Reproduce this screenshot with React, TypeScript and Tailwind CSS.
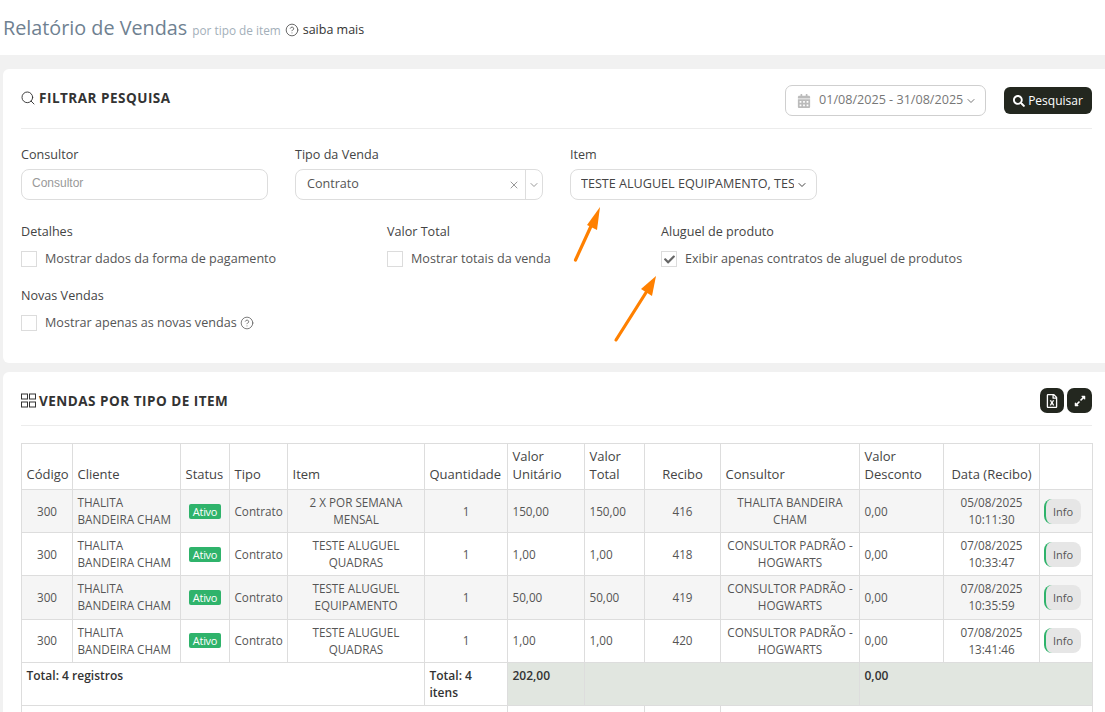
import React from "react";
import { Search, ChevronDown, CircleHelp, X } from "lucide-react";
import { FaCalendarAlt, FaSearch, FaCheck, FaRegFileExcel, FaExpandAlt } from "react-icons/fa";

const GridIcon = () => (
  <svg width="15" height="15" viewBox="0 0 15 15" fill="none" stroke="#333" strokeWidth="1" className="shrink-0">
    <rect x="0.5" y="1" width="6" height="5" />
    <rect x="8.5" y="1" width="6" height="5" />
    <rect x="0.5" y="9" width="6" height="5" />
    <rect x="8.5" y="9" width="6" height="5" />
  </svg>
);

const Check = ({ label, checked, help }: { label: string; checked?: boolean; help?: boolean }) => (
  <div className="flex items-center h-4 text-[12.6px] text-[#555]">
    <span className="w-4 h-4 border border-[#dcdcdc] flex items-center justify-center shrink-0 mr-2">
      {checked && <FaCheck size={11} color="#666" />}
    </span>
    <span>{label}</span>
    {help && <CircleHelp size={14} strokeWidth={1.3} className="ml-[3px] mb-[1px] text-[#555]" />}
  </div>
);

const Label = ({ children }: { children: React.ReactNode }) => (
  <div className="text-[12.6px] leading-[18px] text-[#444]">{children}</div>
);

const rows = [
  ["2 X POR SEMANA MENSAL", "150,00", "416", "THALITA BANDEIRA CHAM", "05/08/2025", "10:11:30"],
  ["TESTE ALUGUEL QUADRAS", "1,00", "418", "CONSULTOR PADRÃO - HOGWARTS", "07/08/2025", "10:33:47"],
  ["TESTE ALUGUEL EQUIPAMENTO", "50,00", "419", "CONSULTOR PADRÃO - HOGWARTS", "07/08/2025", "10:35:59"],
  ["TESTE ALUGUEL QUADRAS", "1,00", "420", "CONSULTOR PADRÃO - HOGWARTS", "07/08/2025", "13:41:46"],
];

const td = "border border-[#dddddd] px-[4.5px] py-[4px] align-middle";
const th = "border border-[#dddddd] px-[4.5px] pt-[3px] pb-[6px] align-bottom font-normal text-left text-[13px] text-[#444]";
const tot = "border border-[#dddddd] px-[4.5px] py-[4px] align-top";

export default function App() {
  return (
    <div className="relative w-[1105px] h-[712px] overflow-hidden bg-[#f1f1f1] font-['Open_Sans',sans-serif]">
      <div className="h-[55px] bg-white flex items-center pl-[3px] pt-[1px]">
        <span className="text-[19.8px] text-[#6f8191]">Relatório de Vendas</span>
        <span className="text-[11.8px] text-[#a3afb9] ml-[5px] mt-[5px]">por tipo de item</span>
        <CircleHelp size={14} strokeWidth={1.5} className="ml-[4px] mt-[3px] text-[#555]" />
        <span className="text-[12.5px] text-[#333] ml-[4px] mt-[4px]">saiba mais</span>
      </div>

      <div className="mt-[14px] ml-[3px] h-[294px] bg-white rounded-l-[6px] pl-[18px] pr-[13px]">
        <div className="h-[60px] border-b border-[#ececec] flex items-center">
          <Search size={16} strokeWidth={1.4} className="text-[#333] -ml-[1px] mb-[1px]" />
          <span className="ml-[3px] text-[13.5px] font-bold tracking-[0.5px] text-[#333]">FILTRAR PESQUISA</span>
          <div className="ml-auto w-[201px] h-[31px] border border-[#cfcfcf] rounded-[7px] flex items-center pl-[11px] text-[#777] text-[12.6px] mt-[4px]">
            <FaCalendarAlt size={14} color="#bbbbbb" />
            <span className="ml-[8px]">01/08/2025 - 31/08/2025</span>
            <ChevronDown size={12} className="ml-[2px]" />
          </div>
          <button className="ml-[18px] w-[88px] h-[27px] bg-[#23271f] rounded-[6px] text-white text-[12px] flex items-center justify-center gap-[3px] mt-[4px]">
            <FaSearch size={12} />
            Pesquisar
          </button>
        </div>

        <div className="flex gap-[27px] mt-[17px]">
          <div className="w-[247px]">
            <Label>Consultor</Label>
            <div className="mt-[5px] h-[31px] border border-[#dddddd] rounded-[8px] flex items-center pl-[10px] pb-[3px] text-[12px] text-[#999] font-['Liberation_Sans',sans-serif]">
              Consultor
            </div>
          </div>
          <div className="w-[248px]">
            <Label>Tipo da Venda</Label>
            <div className="mt-[5px] h-[31px] border border-[#dddddd] rounded-[8px] flex items-center pl-[11px] text-[12.6px] text-[#555]">
              <span>Contrato</span>
              <X size={12} className="ml-auto text-[#999]" />
              <span className="ml-[5px] h-full border-l border-[#dddddd] flex items-center px-[2px]">
                <ChevronDown size={12} className="text-[#999]" />
              </span>
            </div>
          </div>
          <div className="w-[247px]">
            <Label>Item</Label>
            <div className="mt-[5px] h-[31px] border border-[#dddddd] rounded-[8px] flex items-center pl-[10px] text-[12.6px] text-[#444]">
              <span className="w-[213px] overflow-hidden whitespace-nowrap">TESTE ALUGUEL EQUIPAMENTO, TESTE ALUGUEL QUADRAS</span>
              <ChevronDown size={12} className="ml-[2px]" />
            </div>
          </div>
        </div>

        <div className="flex mt-[23px]">
          <div className="w-[366px]">
            <Label>Detalhes</Label>
            <div className="mt-[10px]"><Check label="Mostrar dados da forma de pagamento" /></div>
          </div>
          <div className="w-[274px]">
            <Label>Valor Total</Label>
            <div className="mt-[10px]"><Check label="Mostrar totais da venda" /></div>
          </div>
          <div>
            <Label>Aluguel de produto</Label>
            <div className="mt-[10px]"><Check checked label="Exibir apenas contratos de aluguel de produtos" /></div>
          </div>
        </div>

        <div className="mt-[20px]">
          <Label>Novas Vendas</Label>
          <div className="mt-[10px]"><Check help label="Mostrar apenas as novas vendas" /></div>
        </div>
      </div>

      <div className="mt-[9px] ml-[3px] h-[400px] bg-white rounded-tl-[6px] pl-[18px] pr-[13px]">
        <div className="h-[54px] pt-[4px] border-b border-[#ececec] flex items-center">
          <GridIcon />
          <span className="ml-[3px] text-[13.5px] font-bold tracking-[0.5px] text-[#333] mt-[1px]">VENDAS POR TIPO DE ITEM</span>
          <button className="ml-auto w-[24px] h-[25px] bg-[#23271f] rounded-[7px] flex items-center justify-center text-white">
            <FaRegFileExcel size={14} />
          </button>
          <button className="ml-[3px] w-[25px] h-[25px] bg-[#23271f] rounded-[7px] flex items-center justify-center text-white">
            <FaExpandAlt size={12} />
          </button>
        </div>

        <table className="mt-[17px] w-[1071px] table-fixed border-collapse text-[11.7px] leading-[17.1px] text-[#555]">
          <colgroup>
            <col className="w-[51px]" />
            <col className="w-[108px]" />
            <col className="w-[49px]" />
            <col className="w-[58px]" />
            <col className="w-[137px]" />
            <col className="w-[83px]" />
            <col className="w-[77px]" />
            <col className="w-[60px]" />
            <col className="w-[76px]" />
            <col className="w-[139px]" />
            <col className="w-[84px]" />
            <col className="w-[96px]" />
            <col className="w-[53px]" />
          </colgroup>
          <thead>
            <tr className="leading-[18px]">
              <th className={th}>Código</th>
              <th className={th}>Cliente</th>
              <th className={th}>Status</th>
              <th className={th}>Tipo</th>
              <th className={th}>Item</th>
              <th className={th}>Quantidade</th>
              <th className={th}>Valor Unitário</th>
              <th className={th}>Valor Total</th>
              <th className={`${th} !text-center`}>Recibo</th>
              <th className={th}>Consultor</th>
              <th className={th}>Valor Desconto</th>
              <th className={`${th} !text-center whitespace-nowrap !px-0`}>Data (Recibo)</th>
              <th className={th}></th>
            </tr>
          </thead>
          <tbody>
            {rows.map((r, i) => (
              <tr key={i} className={i % 2 === 0 ? "bg-[#f5f5f5]" : "bg-white"}>
                <td className={`${td} text-center`}>300</td>
                <td className={td}>THALITA BANDEIRA CHAM</td>
                <td className={`${td} text-center`}>
                  <span className="inline-block bg-[#2fb36b] text-white text-[11px] leading-[15px] px-[3.5px] rounded-[2px] tracking-[-0.3px]">Ativo</span>
                </td>
                <td className={td}>Contrato</td>
                <td className={`${td} text-center`}>{r[0]}</td>
                <td className={`${td} text-center`}>1</td>
                <td className={td}>{r[1]}</td>
                <td className={td}>{r[1]}</td>
                <td className={`${td} text-center`}>{r[2]}</td>
                <td className={`${td} text-center`}>{r[3]}</td>
                <td className={td}>0,00</td>
                <td className={`${td} text-center`}>{r[4]}<br />{r[5]}</td>
                <td className={`${td} !pl-[3.5px]`}>
                  <span className="block w-[37px] h-[25px] bg-[#e6e6e6] border-l-2 border-[#2fb36b] rounded-[8px] text-[11px] leading-[25px] text-center">Info</span>
                </td>
              </tr>
            ))}
            <tr className="font-semibold text-[12px] text-[#333] h-[43px]">
              <td colSpan={5} className={tot}>Total: 4 registros</td>
              <td className={tot}>Total: 4 itens</td>
              <td className={`${tot} bg-[#e1e6e0]`}>202,00</td>
              <td colSpan={3} className="border border-[#dddddd] bg-[#e1e6e0]"></td>
              <td className={`${tot} !border-r-0 bg-[#e1e6e0]`}>0,00</td>
              <td colSpan={2} className="border border-[#dddddd] !border-l-0 bg-[#e1e6e0]"></td>
            </tr>
            <tr className="h-[30px]">
              <td colSpan={6} className="border border-[#dddddd]"></td>
              <td colSpan={2} className="border border-[#dddddd]"></td>
              <td className="border border-[#dddddd]"></td>
              <td colSpan={4} className="border border-[#dddddd]"></td>
            </tr>
          </tbody>
        </table>
      </div>

      <svg className="absolute left-0 top-0 pointer-events-none" width="1105" height="712" viewBox="0 0 1105 712">
        <line x1="575.5" y1="260" x2="592" y2="224" stroke="#ff8000" strokeWidth="3.2" strokeLinecap="round" />
        <polygon points="600,207 587,225 597,230" fill="#ff8000" />
        <line x1="616" y1="340" x2="647" y2="291" stroke="#ff8000" strokeWidth="3.2" strokeLinecap="round" />
        <polygon points="656,276 641,289 652,296" fill="#ff8000" />
      </svg>
    </div>
  );
}
